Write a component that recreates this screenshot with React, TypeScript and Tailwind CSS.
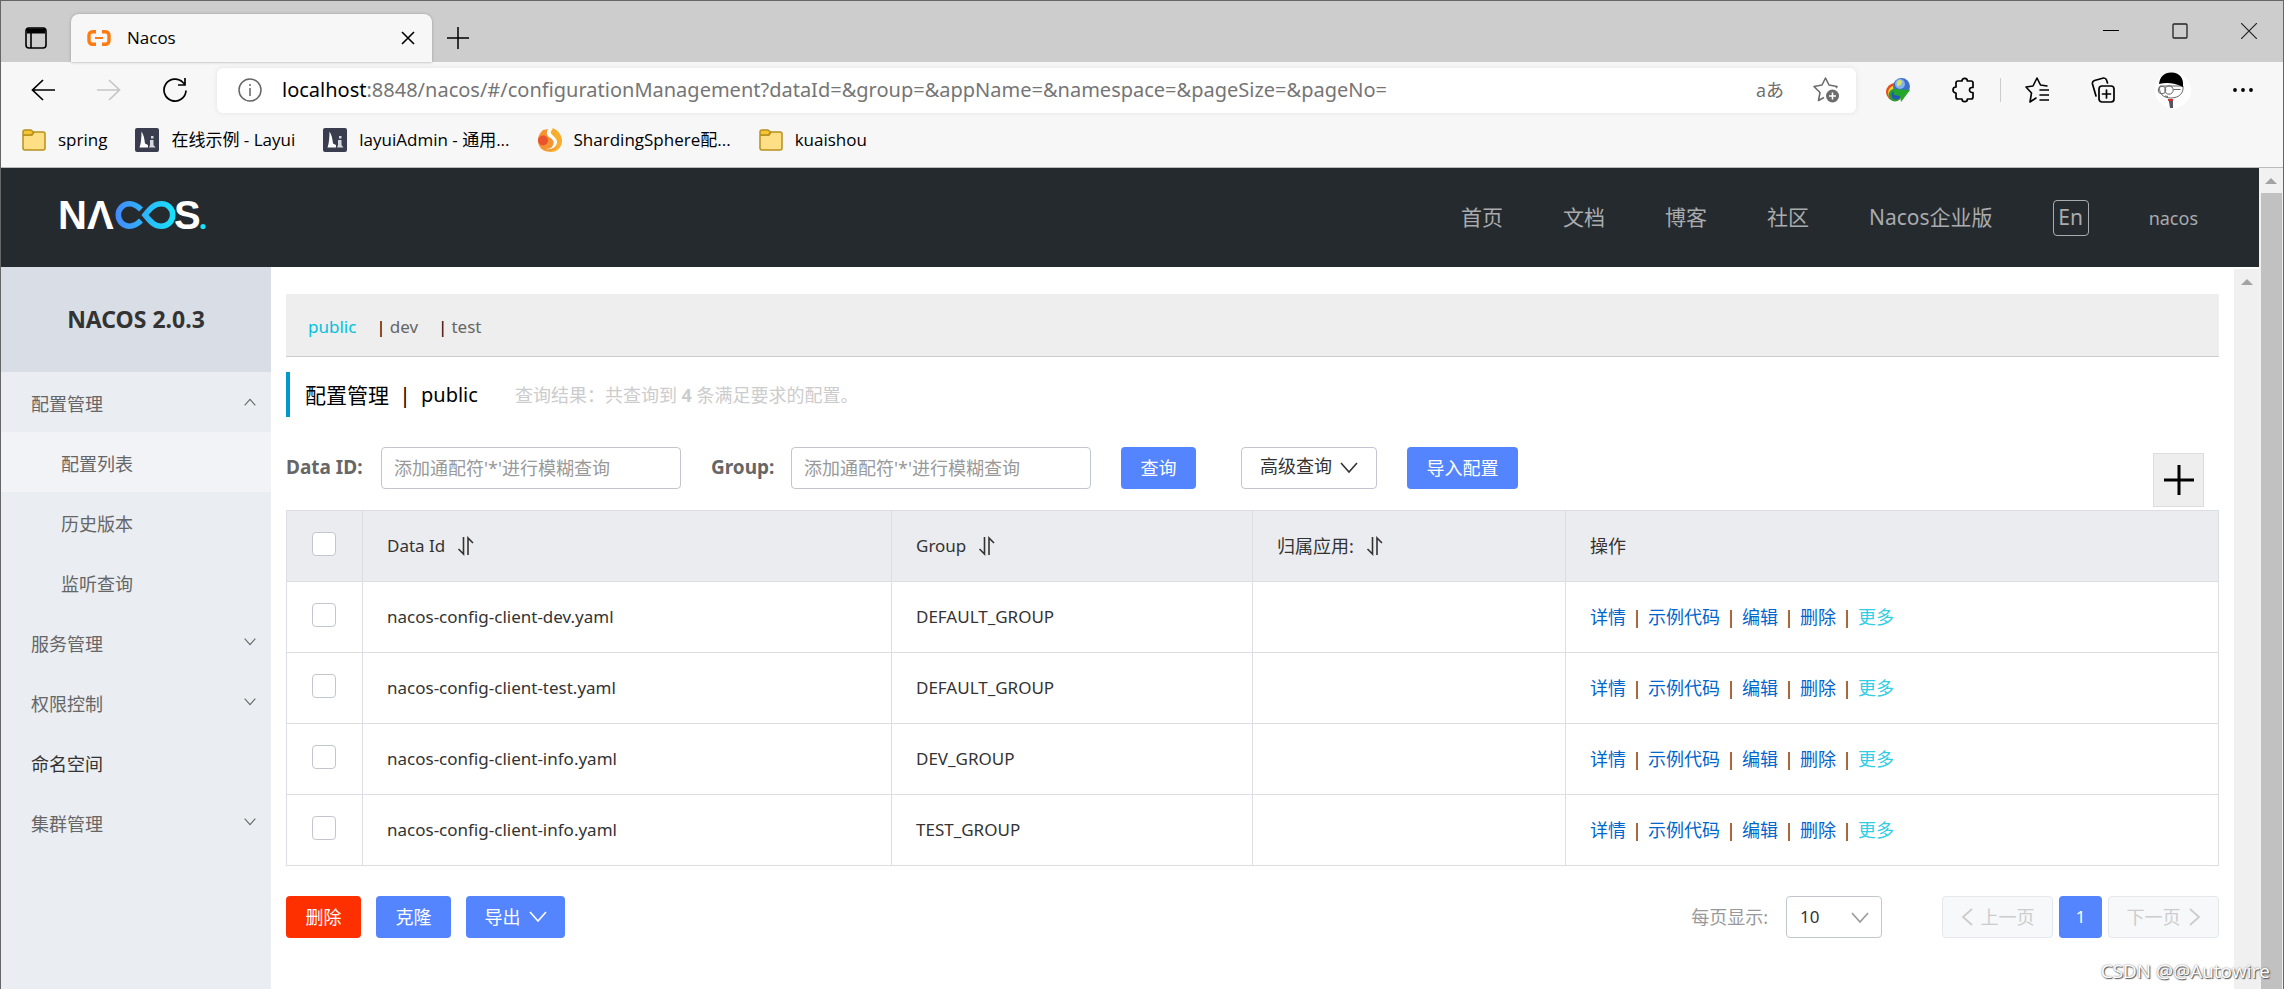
import { useState } from "react";
import type { ReactNode } from "react";
import clsx from "clsx";

const UI = "font-['Open_Sans','Noto_Sans_CJK_SC',sans-serif]";
const BODY = "font-['Noto_Sans','Noto_Sans_CJK_SC',sans-serif]";

const rows = [
  { id: "nacos-config-client-dev.yaml", group: "DEFAULT_GROUP" },
  { id: "nacos-config-client-test.yaml", group: "DEFAULT_GROUP" },
  { id: "nacos-config-client-info.yaml", group: "DEV_GROUP" },
  { id: "nacos-config-client-info.yaml", group: "TEST_GROUP" },
];

const actions = ["详情", "示例代码", "编辑", "删除"];

function Chevron({ className, up = false }: { className?: string; up?: boolean }) {
  return (
    <svg viewBox="0 0 18 12" className={className} fill="none" stroke="currentColor" strokeWidth="1.6">
      <path d={up ? "M1 11 9 2l8 9" : "M1 1l8 9 8-9"} />
    </svg>
  );
}

function SortIcon() {
  return (
    <svg viewBox="0 0 18 20" className="h-5 w-[18px]" fill="none" stroke="currentColor" strokeWidth="1.6">
      <path d="M6.5 1v17L1.5 13M11 19V2l5 5" />
    </svg>
  );
}

function FolderIcon() {
  return (
    <svg viewBox="0 0 24 24" className="size-6" stroke="#b8901c" strokeWidth="1.5" strokeLinejoin="round">
      <path d="M1 7h9l2-3h9a2 2 0 0 1 2 2v14a2 2 0 0 1-2 2H3a2 2 0 0 1-2-2z" fill="#ffdf85" />
      <path d="M1 5.500V4a2 2 0 0 1 2-2h6l2.500 2-2 3H2.500A1.500 1.500 0 0 1 1 5.500z" fill="#f5c633" />
    </svg>
  );
}

function LayuiIcon() {
  return (
    <svg viewBox="0 0 24 24" className="size-6">
      <rect width="24" height="24" rx="2" fill="#393d4e" />
      <path d="M6.500 3.500c2 3 3 7 3.500 12l3 1.500v2.500H4.500c1.500-4 2-10 2-16z" fill="#fff" />
      <path d="M15 12h3.500v5l2 2.500H14l1-2.500zM16 8h2.500v2.500H16z" fill="#d5d7de" />
    </svg>
  );
}

function SphereIcon() {
  return (
    <svg viewBox="0 0 24 24" className="size-6">
      <path d="M15 0c6 3 9 8 9 13a11 11 0 0 1-11 11c-4 0-7-1-9-4z" fill="#f6ae2c" />
      <path d="M5 2C1 6 0 9 0 13c0 5 4 10 9 10 6 0 10-3 10-8 0-6-7-6-8-14z" fill="#f59331" />
      <circle cx="5" cy="12.500" r="5" fill="#e9532f" />
      <path d="M12 0c-4 2-4 7-1 9s6 4 4 8c-1 3-4 4-7 4 6 1 11-2 11-7 0-6-8-6-7-14z" fill="#fff" />
    </svg>
  );
}

function NacosLogo() {
  return (
    <svg viewBox="-6 -10 160 55" className="h-[55px] w-40" aria-label="NACOS.">
      <defs>
        <linearGradient id="loop" x1="54" y1="0" x2="114" y2="0" gradientUnits="userSpaceOnUse">
          <stop offset="0" stopColor="#4489fd" />
          <stop offset="1" stopColor="#18e2fa" />
        </linearGradient>
      </defs>
      <g fill="#fff" fontFamily="Liberation Sans" fontWeight="700" fontSize="40">
        <text x="-3" y="29">
          N
        </text>
        <text x="26" y="29">
          Λ
        </text>
        <text x="113" y="29">
          S
        </text>
      </g>
      <g fill="none" stroke="url(#loop)" strokeWidth="5.6">
        <path d="M80 9.500C76 5.500 73 3.800 68.500 3.800a11.200 11.200 0 0 0 0 22.400c4.500 0 7.500-1.700 11.500-5.700" />
        <path d="M84 15c6-7.500 10-11.200 16.500-11.200a11.200 11.200 0 0 1 0 22.400C94 26.200 90 22.500 84 15z" />
      </g>
      <circle cx="142" cy="26.500" r="2.600" fill="#18e2fa" />
    </svg>
  );
}

function IconButton({ label, children, className }: { label: string; children: ReactNode; className?: string }) {
  return (
    <button type="button" aria-label={label} className={clsx("flex shrink-0 items-center justify-center", className)}>
      {children}
    </button>
  );
}

function TabStrip() {
  return (
    <div className="flex h-[61px] items-end bg-[#cdcdcd]">
      <IconButton label="Tab actions" className="h-12 w-[70px]">
        <svg viewBox="0 0 22 22" className="size-[22px]" fill="none" stroke="#000" strokeWidth="1.6">
          <rect x="1" y="1" width="20" height="20" rx="3" />
          <path d="M2 4h18" strokeWidth="5" />
          <path d="M6 6v15" />
        </svg>
      </IconButton>
      <div className="flex h-12 w-[361px] items-center rounded-t-lg bg-[#f7f7f7] pr-3 pl-4 shadow-[0_0_3px_#999]">
        <svg viewBox="0 0 24 16" className="h-4 w-6" fill="none" stroke="#ff7a0f" strokeWidth="3.4">
          <path d="M9 1.700H5.500A3.500 3.500 0 0 0 2 5.200v5.600a3.500 3.500 0 0 0 3.500 3.500H9M15 1.700h3.500A3.500 3.500 0 0 1 22 5.200v5.600a3.500 3.500 0 0 1-3.500 3.500H15" />
          <path d="M8 8h8" strokeWidth="2" />
        </svg>
        <span className="ml-4 flex-1 text-[17px]">Nacos</span>
        <IconButton label="Close tab" className="size-6">
          <svg viewBox="0 0 14 14" className="size-[14px]" stroke="#000" strokeWidth="1.6">
            <path d="M1 1l12 12M13 1 1 13" />
          </svg>
        </IconButton>
      </div>
      <IconButton label="New tab" className="h-12 w-[52px]">
        <svg viewBox="0 0 22 22" className="size-[22px]" stroke="#000" strokeWidth="1.5">
          <path d="M11 0v22M0 11h22" />
        </svg>
      </IconButton>
      <div className="ml-auto flex self-start">
        <IconButton label="Minimize" className="h-[60px] w-[69px]">
          <svg viewBox="0 0 16 16" className="size-4" stroke="#000">
            <path d="M0 7.500h16" />
          </svg>
        </IconButton>
        <IconButton label="Maximize" className="h-[60px] w-[69px]">
          <svg viewBox="0 0 16 16" className="size-4" stroke="#222" fill="none" strokeWidth="1.3">
            <rect x="1" y="1" width="14" height="14" rx="1" />
          </svg>
        </IconButton>
        <IconButton label="Close" className="h-[60px] w-[69px]">
          <svg viewBox="0 0 16 16" className="size-4" stroke="#222" strokeWidth="1.2">
            <path d="M0 0l16 16M16 0 0 16" />
          </svg>
        </IconButton>
      </div>
    </div>
  );
}

function Toolbar() {
  return (
    <div className="flex h-14 items-center bg-[#f7f7f7] pr-7 pl-[30px]">
      <div className="flex w-[186px] gap-[42px]">
        <IconButton label="Back" className="size-6">
          <svg viewBox="0 0 24 22" className="h-[22px] w-6" fill="none" stroke="#000" strokeWidth="1.7">
            <path d="M24 11H1M12 1 1.500 11 12 21" />
          </svg>
        </IconButton>
        <IconButton label="Forward" className="size-6">
          <svg viewBox="0 0 24 22" className="h-[22px] w-6" fill="none" stroke="#c6c6c6" strokeWidth="1.7">
            <path d="M0 11h23M12 1l10.500 10L12 21" />
          </svg>
        </IconButton>
        <IconButton label="Refresh" className="size-6">
          <svg viewBox="0 0 24 24" className="size-6" fill="none" stroke="#000" strokeWidth="1.7">
            <path d="M23 12.500A11 11 0 1 1 20 4.500l2 2M22 0v7h-7" />
          </svg>
        </IconButton>
      </div>
      <div className="flex h-[45px] flex-1 items-center rounded-md bg-white pr-4 pl-[21px] shadow-[0_0_5px_#e2e2e2]">
        <svg viewBox="0 0 24 24" className="size-6 shrink-0" fill="none" stroke="#666" strokeWidth="1.5">
          <circle cx="12" cy="12" r="11" />
          <path d="M12 10v8M12 6v2" />
        </svg>
        <div className={clsx("ml-5 flex-1 text-[20px] text-[#757575]", BODY)}>
          <span className="text-black">localhost</span>
          :8848/nacos/#/configurationManagement?dataId=&amp;group=&amp;appName=&amp;namespace=&amp;pageSize=&amp;pageNo=
        </div>
        <button type="button" className="mr-7 text-lg text-[#6c6c6c]">
          aあ
        </button>
        <IconButton label="Add to favorites" className="w-7">
          <svg viewBox="0 0 28 28" className="size-7" fill="none" stroke="#6c6c6c" strokeWidth="1.6" strokeLinejoin="round">
            <path d="M12 21.500 6.500 24.500l1.500-8L2 10.500l8-1.500L13.500 2l3.500 7 8 1.500-1 1.500" />
            <circle cx="20.500" cy="20" r="6.500" fill="#6c6c6c" stroke="none" />
            <path d="M20.500 16.500v7M17 20h7" stroke="#fff" />
          </svg>
        </IconButton>
      </div>
      <div className="ml-[30px] flex items-center">
        <IconButton label="Download manager" className="w-6">
          <svg viewBox="0 0 24 24" className="size-6">
            <circle cx="9" cy="14" r="9" fill="#e94b22" />
            <circle cx="9.500" cy="15" r="7.500" fill="#f9dc2c" />
            <circle cx="9" cy="17" r="6.500" fill="#2a9a3a" />
            <circle cx="10" cy="17" r="4.500" fill="#2456b8" />
            <circle cx="15.500" cy="8.500" r="8.500" fill="#3f6fc8" />
            <circle cx="14" cy="6" r="5" fill="#86b3ee" />
            <path d="M11 4c2-3 5-2 5 0s-2 3-3 4-3 0-2-4z" fill="#d8e25a" />
            <path d="M7 11l17 1-9 12-1-6-6-1z" fill="#24a52c" />
          </svg>
        </IconButton>
        <IconButton label="Extensions" className="ml-[42px] w-6">
          <svg viewBox="0 0 24 26" className="h-[26px] w-6" fill="none" stroke="#000" strokeWidth="1.7" strokeLinejoin="round">
            <path d="M6 4h4a2.700 2.700 0 0 1 5.400 0H19a2 2 0 0 1 2 2v4.500h-1a2.500 2.500 0 0 0 0 5h1V20a2 2 0 0 1-2 2h-3.600a2.700 2.700 0 0 1-5.400 0H6a2 2 0 0 1-2-2v-4a3 3 0 0 1 0-6V6a2 2 0 0 1 2-2z" />
          </svg>
        </IconButton>
        <div className="ml-6 h-6 w-px bg-[#ccc]" />
        <IconButton label="Favorites" className="ml-6 w-6">
          <svg viewBox="0 0 24 26" className="h-[26px] w-6" fill="none" stroke="#000" strokeWidth="1.6" strokeLinejoin="round" strokeLinecap="round">
            <path d="M11 21l-6 4 1.500-9L1 10l7-1 4-8 3.500 7L22 9M15 13h9M15 18h9M15 23h9" />
          </svg>
        </IconButton>
        <IconButton label="Collections" className="ml-[42px] w-6">
          <svg viewBox="0 0 24 26" className="h-[26px] w-6" fill="none" stroke="#000" strokeWidth="1.7" strokeLinecap="round">
            <rect x="8" y="9" width="15" height="16" rx="3" />
            <path d="M15.500 13v8M11.500 17h8M5 19 1.500 7a3 3 0 0 1 2-3.500l9-2.500a3 3 0 0 1 3 2l1 3" />
          </svg>
        </IconButton>
        <IconButton label="Profile" className="ml-10">
          <svg viewBox="0 0 36 36" className="size-9">
            <circle cx="18" cy="18" r="18" fill="#fff" />
            <path d="M5 14c-2 7 3 12 11 12s13-5 12-12z" fill="#fff" stroke="#666" />
            <path d="M4 12C5 4 10 0 17 0.500S29 5 28 15C20 11 12 10 4 12z" />
            <g fill="none" stroke="#666">
              <circle cx="7" cy="18" r="3.800" />
              <circle cx="14" cy="18" r="4.200" />
              <path d="M18.500 17.500h7M10 24l3 .5" />
            </g>
            <path d="M13.500 27h4.500v9h-3z" fill="#556" />
            <path d="M13 27h5v2h-5z" fill="#c33" />
          </svg>
        </IconButton>
        <IconButton label="Settings and more" className="ml-10 w-6">
          <svg viewBox="0 0 24 6" className="h-[6px] w-6">
            <circle cx="4" cy="3" r="1.900" />
            <circle cx="12" cy="3" r="1.900" />
            <circle cx="20" cy="3" r="1.900" />
          </svg>
        </IconButton>
      </div>
    </div>
  );
}

function Bookmark({ icon, children }: { icon: ReactNode; children: string }) {
  return (
    <a href="#" className="flex items-center gap-3">
      {icon}
      {children}
    </a>
  );
}

function BookmarksBar() {
  return (
    <div className="flex h-[50px] items-center gap-7 border-b border-[#bcbcbc] bg-[#f7f7f7] pb-[6px] pl-[21px] text-[17px]">
      <Bookmark icon={<FolderIcon />}>spring</Bookmark>
      <Bookmark icon={<LayuiIcon />}>在线示例 - Layui</Bookmark>
      <Bookmark icon={<LayuiIcon />}>layuiAdmin - 通用...</Bookmark>
      <Bookmark icon={<SphereIcon />}>ShardingSphere配...</Bookmark>
      <Bookmark icon={<FolderIcon />}>kuaishou</Bookmark>
    </div>
  );
}

function Header() {
  return (
    <header className="flex h-[99px] items-center bg-[#252a2f] pr-[61px] pl-[54px] text-[#a9abad]">
      <NacosLogo />
      <nav className="ml-auto flex items-center gap-[60px] text-[21px]">
        <a href="#">首页</a>
        <a href="#">文档</a>
        <a href="#">博客</a>
        <a href="#">社区</a>
        <a href="#">Nacos企业版</a>
        <button type="button" className="flex h-9 w-9 items-center justify-center rounded-sm border border-[#a9abad]">
          En
        </button>
        <a href="#" className="text-lg">
          nacos
        </a>
      </nav>
    </header>
  );
}

function Sidebar() {
  const item = "flex h-[60px] w-full items-center justify-between pt-1 pr-[15px] pl-[30px]";
  const sub = "flex h-[60px] items-center pt-1 pl-[60px]";
  return (
    <aside className="w-[270px] shrink-0 bg-[#eaedf2] text-lg text-[#666]">
      <h1 className="flex h-[105px] items-center justify-center bg-[#d9dde5] text-[23px] font-bold text-[#333]">NACOS 2.0.3</h1>
      <button type="button" className={item}>
        配置管理
        <Chevron up className="mb-1 h-2 w-3" />
      </button>
      <a href="#" className={clsx(sub, "bg-[#f2f3f7]")}>
        配置列表
      </a>
      <a href="#" className={sub}>
        历史版本
      </a>
      <a href="#" className={sub}>
        监听查询
      </a>
      <button type="button" className={item}>
        服务管理
        <Chevron className="mb-1 h-2 w-3" />
      </button>
      <button type="button" className={item}>
        权限控制
        <Chevron className="mb-1 h-2 w-3" />
      </button>
      <a href="#" className={clsx(item, "text-[#333]")}>
        命名空间
      </a>
      <button type="button" className={item}>
        集群管理
        <Chevron className="mb-1 h-2 w-3" />
      </button>
    </aside>
  );
}

function SearchBar() {
  const field =
    "h-[42px] w-[300px] rounded-sm border border-[#c4c6cf] bg-white px-3 placeholder:text-[#999] focus:outline-none";
  return (
    <form className="mt-[30px] flex items-center" onSubmit={(e) => e.preventDefault()}>
      <label htmlFor="dataId" className="w-[95px] text-[19px] font-bold">
        Data ID:
      </label>
      <input id="dataId" className={field} placeholder="添加通配符'*'进行模糊查询" />
      <label htmlFor="group" className="ml-[30px] w-20 text-[19px] font-bold">
        Group:
      </label>
      <input id="group" className={field} placeholder="添加通配符'*'进行模糊查询" />
      <button type="submit" className="ml-[30px] h-[42px] w-[75px] rounded-sm bg-[#5584ff] text-white">
        查询
      </button>
      <button
        type="button"
        className="ml-[45px] flex h-[42px] w-[136px] items-center justify-center gap-2 rounded-sm border border-[#c4c6cf] text-[#333]"
      >
        <span className="pb-1">高级查询</span>
        <Chevron className="h-3 w-[18px]" />
      </button>
      <button type="button" className="ml-[30px] h-[42px] w-[111px] rounded-sm bg-[#5584ff] text-white">
        导入配置
      </button>
    </form>
  );
}

function ConfigTable() {
  const [checked, setChecked] = useState<boolean[]>(rows.map(() => false));
  const box = "mb-1 ml-px block size-6 appearance-none rounded-sm border border-[#c4c6cf] bg-white checked:bg-[#5584ff]";
  const cell = "border border-[#dcdee3] px-6 text-left font-normal";

  return (
    <table className="mt-[21px] w-full table-fixed border-collapse text-[#333]">
      <colgroup>
        <col className="w-[76px]" />
        <col className="w-[529px]" />
        <col className="w-[361px]" />
        <col className="w-[313px]" />
        <col />
      </colgroup>
      <thead>
        <tr className="h-[71px] bg-[#ebecf0]">
          <th className={cell}>
            <input
              type="checkbox"
              aria-label="Select all"
              className={box}
              checked={checked.every(Boolean)}
              onChange={(e) => setChecked(rows.map(() => e.target.checked))}
            />
          </th>
          <th className={cell}>
            <div className="flex items-center gap-3 text-[17px]">
              Data Id <SortIcon />
            </div>
          </th>
          <th className={cell}>
            <div className="flex items-center gap-3 text-[17px]">
              Group <SortIcon />
            </div>
          </th>
          <th className={cell}>
            <div className="flex items-center gap-3">
              归属应用: <SortIcon />
            </div>
          </th>
          <th className={cell}>操作</th>
        </tr>
      </thead>
      <tbody>
        {rows.map((row, i) => (
          <tr key={i} className="h-[71px]">
            <td className={cell}>
              <input
                type="checkbox"
                aria-label={row.id}
                className={box}
                checked={checked[i]}
                onChange={() => setChecked(checked.map((c, j) => (i === j ? !c : c)))}
              />
            </td>
            <td className={clsx(cell, "text-[17px]")}>{row.id}</td>
            <td className={clsx(cell, "text-[17px]")}>{row.group}</td>
            <td className={cell} />
            <td className={cell}>
              <div className="flex">
                {actions.map((a) => (
                  <span key={a}>
                    <a href="#" className="text-[#06c]">
                      {a}
                    </a>
                    <span className="inline-block w-[22px] text-center">|</span>
                  </span>
                ))}
                <a href="#" className="text-[#33cde5]">
                  更多
                </a>
              </div>
            </td>
          </tr>
        ))}
      </tbody>
    </table>
  );
}

function TableFooter() {
  const pager = "flex h-[42px] w-[111px] items-center justify-center gap-2 rounded-sm border border-[#e6e7eb] bg-[#f7f8fa] text-[#ccc]";
  return (
    <div className="mt-[30px] flex items-center">
      <button type="button" className="h-[42px] w-[75px] rounded-sm bg-[#ff3000] text-white">
        删除
      </button>
      <button type="button" className="ml-[15px] h-[42px] w-[75px] rounded-sm bg-[#5584ff] text-white">
        克隆
      </button>
      <button
        type="button"
        className="ml-[15px] flex h-[42px] w-[99px] items-center justify-center gap-2 rounded-sm bg-[#5584ff] text-white"
      >
        导出
        <Chevron className="h-3 w-[18px]" />
      </button>

      <label htmlFor="pageSize" className="ml-auto text-[#999]">
        每页显示:
      </label>
      <div className="relative ml-[18px]">
        <select
          id="pageSize"
          className="h-[42px] w-24 appearance-none rounded-sm border border-[#c4c6cf] bg-white pl-[13px] text-[17px] text-[#333]"
        >
          <option>10</option>
          <option>20</option>
          <option>50</option>
        </select>
        <Chevron className="pointer-events-none absolute top-4 right-[13px] h-3 w-[18px] text-[#999]" />
      </div>
      <div className="ml-[60px] flex gap-[6px]">
        <button type="button" disabled className={pager}>
          <svg viewBox="0 0 12 18" className="h-[18px] w-3" fill="none" stroke="currentColor" strokeWidth="1.8">
            <path d="M11 1 2 9l9 8" />
          </svg>
          上一页
        </button>
        <button type="button" className="h-[42px] w-[43px] rounded-sm bg-[#5584ff] text-[17px] text-white">
          1
        </button>
        <button type="button" disabled className={pager}>
          下一页
          <svg viewBox="0 0 12 18" className="h-[18px] w-3" fill="none" stroke="currentColor" strokeWidth="1.8">
            <path d="M1 1l9 8-9 8" />
          </svg>
        </button>
      </div>
    </div>
  );
}

function Main() {
  return (
    <main className="relative min-w-0 flex-1 px-[15px] pt-[27px] text-lg text-[#666]">
      <div className="flex h-[63px] items-center border-b border-[#ccc] bg-[#eee] pt-1 pl-[22px] text-[17px]">
        <a href="#" className="text-[#00c1de]">
          public
        </a>
        <span className="ml-5 text-black">|</span>
        <a href="#" className="ml-1">
          dev
        </a>
        <span className="ml-5 text-black">|</span>
        <a href="#" className="ml-1">
          test
        </a>
      </div>

      <div className="mt-[15px] flex h-[45px] items-center border-l-4 border-[#09c] pt-px pl-[15px]">
        <h2 className="flex items-center text-[21px] text-black">
          <span>配置管理</span>
          <span className="w-8 text-center">|</span>
          <span className="text-[20px]">public</span>
        </h2>
        <p className="ml-[37px] text-[#ccc]">
          查询结果：共查询到 <strong>4</strong> 条满足要求的配置。
        </p>
      </div>

      <SearchBar />
      <button
        type="button"
        aria-label="新建配置"
        className="absolute top-[186px] right-[30px] flex h-[54px] w-[51px] items-center justify-center border border-[#ddd] bg-[#eee]"
      >
        <svg viewBox="0 0 30 30" className="size-[30px]" stroke="#000" strokeWidth="3">
          <path d="M15 0v30M0 15h30" />
        </svg>
      </button>
      <ConfigTable />
      <TableFooter />
    </main>
  );
}

function ScrollArrow() {
  return (
    <svg viewBox="0 0 12 6" className="h-[6px] w-3" fill="#a3a3a3">
      <path d="M6 0l6 6H0z" />
    </svg>
  );
}

export default function App() {
  return (
    <div className="relative flex min-h-screen flex-col border border-b-0 border-[#666] bg-white">
      <div className={UI}>
        <TabStrip />
        <Toolbar />
        <BookmarksBar />
      </div>
      <div className={clsx("flex flex-1", BODY)}>
        <div className="flex min-w-0 flex-1 flex-col">
          <Header />
          <div className="flex flex-1">
            <Sidebar />
            <Main />
            <div className="mt-[2px] flex w-[25px] justify-center bg-[#f0f0f0] pt-[10px]">
              <ScrollArrow />
            </div>
          </div>
        </div>
        <div className="flex w-6 flex-col bg-[#f1f1f1]">
          <div className="flex h-[25px] items-center justify-center">
            <ScrollArrow />
          </div>
          <div className="mr-px ml-[2px] flex-1 bg-[#c1c1c1]" />
        </div>
      </div>
      <div className={clsx("absolute right-[13px] bottom-1 text-[19px] text-white [text-shadow:1px_1px_1px_#555,0_0_2px_#777]", UI)}>
        CSDN @@Autowire
      </div>
    </div>
  );
}
